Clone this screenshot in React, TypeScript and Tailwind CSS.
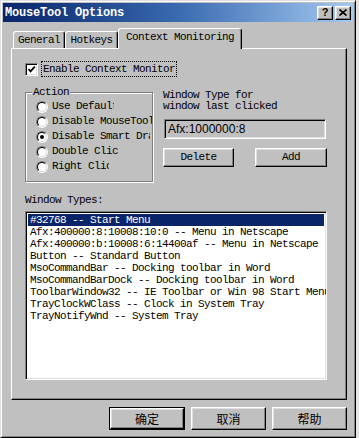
import React from 'react'

const mono = "font-['Liberation_Mono',monospace] text-[11px] tracking-[-0.6px] text-black"
const raised =
  'border border-t-white border-l-white border-r-black border-b-black shadow-[inset_-1px_-1px_0_#808080,inset_1px_1px_0_#dfdfdf] bg-[#c0c0c0]'
const sunken =
  'border border-t-[#808080] border-l-[#808080] border-r-white border-b-white shadow-[inset_1px_1px_0_#000,inset_-1px_-1px_0_#dfdfdf]'

const windowTypes = [
  '#32768 -- Start Menu',
  'Afx:400000:8:10008:10:0 -- Menu in Netscape',
  'Afx:400000:b:10008:6:14400af -- Menu in Netscape',
  'Button -- Standard Button',
  'MsoCommandBar -- Docking toolbar in Word',
  'MsoCommandBarDock -- Docking toolbar in Word',
  'ToolbarWindow32 -- IE Toolbar or Win 98 Start Menu',
  'TrayClockWClass -- Clock in System Tray',
  'TrayNotifyWnd -- System Tray',
]

const actions = [
  { label: 'Use Default', width: 'w-[62px]' },
  { label: 'Disable MouseTool', width: 'w-[100px]' },
  { label: 'Disable Smart Drag', width: 'w-[98px]', checked: true },
  { label: 'Double Click', width: 'w-[66px]' },
  { label: 'Right Click', width: 'w-[57px]' },
]

function Radio({ checked }: { checked?: boolean }) {
  return (
    <span className="flex size-[12px] shrink-0 rounded-full border border-t-[#808080] border-l-[#808080] border-r-white border-b-white">
      <span className="flex flex-1 items-center justify-center rounded-full border border-t-black border-l-black border-r-[#dfdfdf] border-b-[#dfdfdf] bg-white">
        {checked && <span className="size-[4px] rounded-full bg-black" />}
      </span>
    </span>
  )
}

function Tab({ label, active, width }: { label: string; active?: boolean; width: string }) {
  return (
    <div
      className={`${width} ${mono} flex items-center justify-center rounded-t-[3px] border-t border-l border-r border-t-white border-l-white border-r-black shadow-[inset_-1px_0_0_#808080] bg-[#c0c0c0] ${
        active ? 'relative z-10 -mb-px h-[21px] pb-[3px]' : 'h-[17px] pt-[1px]'
      }`}
    >
      {label}
    </div>
  )
}

function Button({ children, className = '' }: { children: React.ReactNode; className?: string }) {
  return (
    <div className={`${raised} flex items-center justify-center ${className}`}>{children}</div>
  )
}

export default function App() {
  return (
    <div className="h-[438px] w-[359px] bg-[#e4e4e4]">
      <div className="flex h-[438px] w-[356px] flex-col border border-t-[#dfdfdf] border-l-[#dfdfdf] border-r-black border-b-black bg-[#c0c0c0] p-[2px] shadow-[inset_1px_1px_0_#fff,inset_-1px_-1px_0_#808080]">
        {/* title bar */}
        <div className="flex h-[19px] shrink-0 items-center justify-between bg-linear-to-r from-[#0a246a] via-[#3a6ab0] to-[#a6caf0] pl-[2px] pr-[2px]">
          <span className="font-['Liberation_Mono',monospace] text-[12px] font-bold tracking-[-0.2px] text-white">
            MouseTool Options
          </span>
          <div className="flex gap-[2px]">
            <div className={`${raised} flex h-[14px] w-[16px] items-center justify-center font-['Liberation_Sans',sans-serif] text-[11px] font-bold leading-none text-black`}>
              ?
            </div>
            <div className={`${raised} flex h-[14px] w-[16px] items-center justify-center`}>
              <svg width="8" height="7" viewBox="0 0 8 7">
                <path d="M0.5 0.5 L7.5 6.5 M7.5 0.5 L0.5 6.5" stroke="black" strokeWidth="1.6" />
              </svg>
            </div>
          </div>
        </div>

        <div className="flex flex-col pl-[8px]">
          {/* tabs */}
          <div className="mt-[6px] flex h-[20px] items-end pl-[2px]">
            <Tab label="General" width="w-[52px]" />
            <Tab label="Hotkeys" width="w-[53px]" />
            <Tab label="Context Monitoring" width="w-[124px]" active />
          </div>

          {/* panel */}
          <div className="flex h-[352px] w-[336px] flex-col border border-t-white border-l-white border-r-black border-b-black pl-[13px] pt-[12px] shadow-[inset_-1px_-1px_0_#808080]">
            <div className="flex h-[16px] items-center">
              <div className={`${sunken} flex size-[13px] items-center justify-center bg-white`}>
                <svg width="9" height="9" viewBox="0 0 9 9">
                  <path d="M1.5 4 L3.5 6.3 L7.8 1.6" stroke="black" strokeWidth="1.8" fill="none" />
                </svg>
              </div>
              <span className={`${mono} ml-[3px] border border-dotted border-black px-[1px] leading-[14px]`}>
                Enable Context Monitor
              </span>
            </div>

            <div className="mt-[9px] flex gap-[10px]">
              <fieldset className="h-[96px] w-[128px] border border-[#808080] shadow-[inset_1px_1px_0_#fff,1px_1px_0_#fff]">
                <legend className={`${mono} ml-[6px] bg-[#c0c0c0] px-[1px] leading-[12px]`}>Action</legend>
                <div className="flex flex-col pl-[10px] pt-[1px]">
                  {actions.map(a => (
                    <div key={a.label} className="flex h-[15px] items-center gap-[4px]">
                      <Radio checked={a.checked} />
                      <span className={`${mono} ${a.width} overflow-hidden whitespace-nowrap leading-[13px]`}>
                        {a.label}
                      </span>
                    </div>
                  ))}
                </div>
              </fieldset>

              <div className="flex w-[164px] flex-col pt-[4px]">
                <span className={`${mono} leading-[11px]`}>Window Type for</span>
                <span className={`${mono} leading-[11px]`}>window last clicked</span>
                <div className={`${sunken} ml-[1px] mt-[7px] flex h-[20px] w-[162px] items-center pl-[3px] font-['Liberation_Sans',sans-serif] text-[12px] text-black`}>
                  Afx:1000000:8
                </div>
                <div className="mt-[9px] flex justify-between">
                  <Button className={`${mono} h-[19px] w-[71px]`}>Delete</Button>
                  <Button className={`${mono} h-[19px] w-[72px]`}>Add</Button>
                </div>
              </div>
            </div>

            <span className={`${mono} mt-[12px] leading-[12px]`}>Window Types:</span>
            <div className={`${sunken} mt-[5px] flex h-[169px] w-[302px] flex-col overflow-hidden bg-white p-[2px]`}>
              {windowTypes.map((t, i) => (
                <div
                  key={t}
                  className={`${mono} flex h-[12px] shrink-0 items-center whitespace-nowrap px-[2px] leading-[12px] ${
                    i === 0 ? 'bg-[#0a246a] text-white' : ''
                  }`}
                >
                  <span className={i === 0 ? 'text-white' : ''}>{t}</span>
                </div>
              ))}
            </div>
          </div>

          {/* dialog buttons */}
          <div className="mt-[7px] flex w-[336px] justify-end gap-[6px]">
            <div className="border border-black">
              <Button className="h-[21px] w-[74px] font-['Noto_Sans_CJK_SC',sans-serif] text-[12px] text-black">确定</Button>
            </div>
            <Button className="h-[23px] w-[75px] font-['Noto_Sans_CJK_SC',sans-serif] text-[12px] text-black">取消</Button>
            <Button className="h-[23px] w-[75px] font-['Noto_Sans_CJK_SC',sans-serif] text-[12px] text-black">帮助</Button>
          </div>
        </div>
      </div>
    </div>
  )
}
